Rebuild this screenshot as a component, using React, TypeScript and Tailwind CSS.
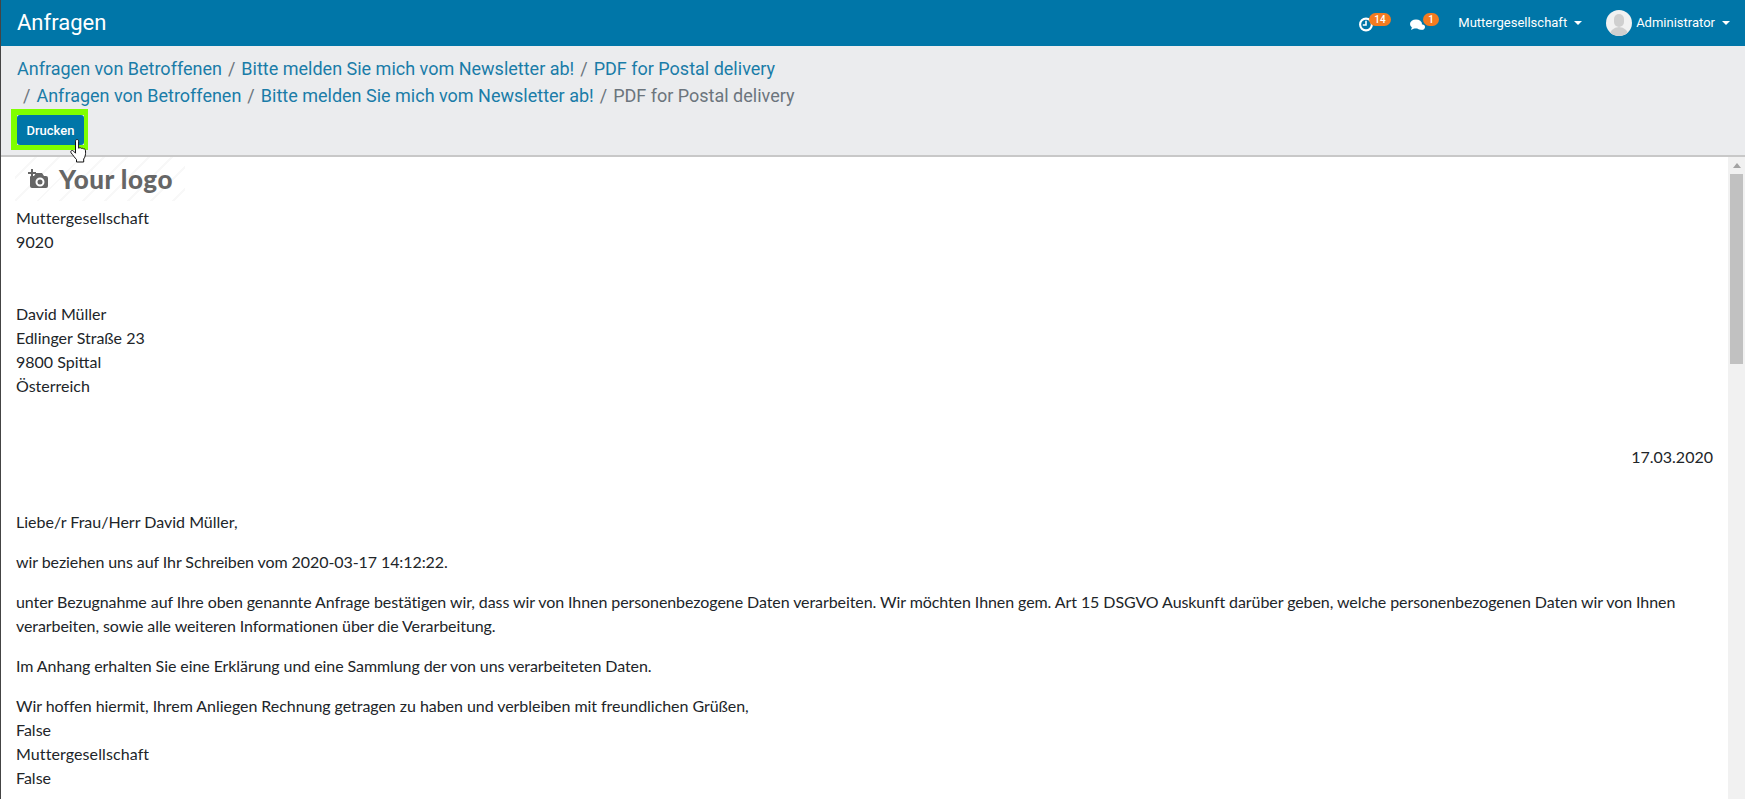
const crumbs = ["Anfragen von Betroffenen", "Bitte melden Sie mich vom Newsletter ab!"];

function Caret() {
  return <span className="ml-[7px] inline-block border-x-[4px] border-t-[4px] border-x-transparent border-t-white align-middle" />;
}

function HandCursor() {
  return (
    <svg className="absolute left-[50px] top-[22px]" width="24" height="28" viewBox="0 0 24 26">
      <path
        d="M10 1.5c1 0 1.6.7 1.6 1.7v7l1-.4c.8-.2 1.4.1 1.7.6.8-.4 1.6-.2 2 .5.8-.3 1.700 0 2 .9.3 1.200.4 3.200.1 5.100-.2 1.800-.9 3-1.700 4.100v3H9.500v-2.500c-1.500-1.500-3.600-4.400-5.300-6.600-.7-1-.4-1.800.2-2.200.7-.5 1.500-.2 2.200.5l1.900 2V3.200c0-1 .6-1.700 1.500-1.700z"
        fill="#fff"
        stroke="#111"
        strokeWidth="1"
      />
    </svg>
  );
}

function LogoPlaceholder() {
  return (
    <div className="flex h-[44px] w-[170px] items-center gap-[9px] bg-[repeating-linear-gradient(135deg,#ffffff_0,#ffffff_14px,#f8f8f8_14px,#f8f8f8_16px)] pl-[13px]">
      <svg width="22" height="20" viewBox="0 0 22 20" fill="#666">
        <path d="M2 0h2v3h3v2H4v3H2V5H-1V3h3z" transform="translate(1 0)" />
        <path
          fillRule="evenodd"
          d="M5 7h3l2-3h6l2 3h2a2 2 0 0 1 2 2v8a2 2 0 0 1-2 2H6a2 2 0 0 1-2-2V8a1 1 0 0 1 1-1zm9 1.500a4.500 4.500 0 1 0 0 9 4.500 4.500 0 0 0 0-9zm0 2a2.500 2.500 0 1 1 0 5 2.500 2.500 0 0 1 0-5z"
          transform="translate(-2 0)"
        />
      </svg>
      <span className="font-['Lato',sans-serif] text-[26px] font-black leading-none tracking-[0.5px] text-[#666]">Your logo</span>
    </div>
  );
}

export default function App() {
  return (
    <div className="flex h-[799px] w-full flex-col overflow-hidden border-l border-[#444] bg-white font-['Roboto',sans-serif]">
      {/* top bar */}
      <header className="flex h-[46px] shrink-0 items-center justify-between bg-[#0076a8] pl-[16px] pr-[15px] text-white">
        <h1 className="text-[22px] font-normal leading-none">Anfragen</h1>
        <div className="flex items-center text-[13px]">
          <div className="relative mr-[20px] flex h-[26px] w-[32px] items-center">
            <svg width="16" height="15" viewBox="0 0 14 14" fill="none" stroke="#fff" strokeWidth="2" className="mt-[3px]">
              <circle cx="7" cy="7" r="5.500" />
              <path d="M7 3.500V7.500H4" strokeWidth="1.500" />
            </svg>
            <span className="absolute left-[11px] top-[3px] rounded-full bg-[#f47b20] px-[5px] text-[10px] font-medium leading-[13px]">14</span>
          </div>
          <div className="relative mr-[20px] flex h-[26px] w-[28px] items-center">
            <svg width="16" height="14" viewBox="0 0 16 14" fill="#fff" className="mt-[4px]">
              <ellipse cx="6" cy="6" rx="6" ry="4.500" />
              <path d="M2 9l-1 3 4-2zM12 10l2 2-4-1z" />
              <ellipse cx="11" cy="9" rx="4" ry="2.800" />
            </svg>
            <span className="absolute left-[13px] top-[3px] rounded-full bg-[#f47b20] px-[5px] text-[10px] font-medium leading-[13px]">1</span>
          </div>
          <div className="mr-[24px] flex items-center">
            Muttergesellschaft
            <Caret />
          </div>
          <div className="flex items-center">
            <div className="relative mr-[4px] h-[26px] w-[26px] overflow-hidden rounded-full bg-[#f1f1f1]">
              <div className="absolute left-[8px] top-[4px] h-[13px] w-[10px] rounded-full bg-[#cfcfcf]" />
              <div className="absolute left-[3px] top-[17px] h-[12px] w-[20px] rounded-t-full bg-[#cfcfcf]" />
            </div>
            Administrator
            <Caret />
          </div>
        </div>
      </header>

      {/* breadcrumb + actions */}
      <section className="relative h-[111px] shrink-0 border-b-2 border-[#c8c8c8] bg-[#ebecee] pl-[16px] text-[18px] leading-[27px] text-[#1a7ca8]">
        <div className="flex pt-[9px]">
          {crumbs.map((c) => (
            <span key={c} className="flex">
              <a>{c}</a>
              <span className="px-[6px] text-[#6c757d]">/</span>
            </span>
          ))}
          <a>PDF for Postal delivery</a>
        </div>
        <div className="flex pl-[6px]">
          <span className="pr-[6px] text-[#6c757d]">/</span>
          {crumbs.map((c) => (
            <span key={c} className="flex">
              <a>{c}</a>
              <span className="px-[6px] text-[#6c757d]">/</span>
            </span>
          ))}
          <span className="text-[#6c757d]">PDF for Postal delivery</span>
        </div>
        <div className="relative ml-[-6px] w-fit border-b-[5px] border-l-[6px] border-r-[4px] border-t-[6px] border-[#7fff00]">
          <button className="flex h-[30px] w-[67px] items-center justify-center rounded-[3px] bg-[#0076a8] text-[13px] font-medium text-white">
            Drucken
          </button>
          <HandCursor />
        </div>
      </section>

      {/* letter preview */}
      <div className="flex min-h-0 flex-1">
        <main className="min-w-0 flex-1 overflow-hidden pl-[15px] pr-[15px] font-['Lato',sans-serif] text-[16px] leading-[24px] text-[#212529]">
          <div className="ml-[-1px]">
            <LogoPlaceholder />
          </div>
          <p className="mt-[5px] tracking-[0.1px]">
            Muttergesellschaft
            <br />
            9020
          </p>
          <p className="mt-[48px]">
            David Müller
            <br />
            Edlinger Straße 23
            <br />
            9800 Spittal
            <br />
            Österreich
          </p>
          <p className="mt-[47px] text-right">17.03.2020</p>
          <p className="mt-[41px]">Liebe/r Frau/Herr David Müller,</p>
          <p className="mt-[16px] tracking-[-0.08px]">wir beziehen uns auf Ihr Schreiben vom 2020-03-17 14:12:22.</p>
          <p className="mt-[16px] tracking-[-0.08px]">
            unter Bezugnahme auf Ihre oben genannte Anfrage bestätigen wir, dass wir von Ihnen personenbezogene Daten verarbeiten. Wir möchten Ihnen gem. Art 15 DSGVO Auskunft darüber geben, welche personenbezogenen Daten wir von Ihnen verarbeiten, sowie alle weiteren Informationen über die Verarbeitung.
          </p>
          <p className="mt-[16px] tracking-[-0.08px]">Im Anhang erhalten Sie eine Erklärung und eine Sammlung der von uns verarbeiteten Daten.</p>
          <p className="mt-[16px]">
            <span className="tracking-[-0.05px]">Wir hoffen hiermit, Ihrem Anliegen Rechnung getragen zu haben und verbleiben mit freundlichen Grüßen,</span>
            <br />
            False
            <br />
            <span className="tracking-[0.1px]">Muttergesellschaft</span>
            <br />
            False
          </p>
        </main>
        {/* scrollbar */}
        <div className="flex w-[17px] shrink-0 flex-col items-center bg-[#f1f1f1]">
          <div className="flex h-[17px] items-center justify-center">
            <span className="border-x-[4px] border-b-[5px] border-x-transparent border-b-[#a3a3a3]" />
          </div>
          <div className="h-[190px] w-[13px] bg-[#c1c1c1]" />
        </div>
      </div>
    </div>
  );
}
